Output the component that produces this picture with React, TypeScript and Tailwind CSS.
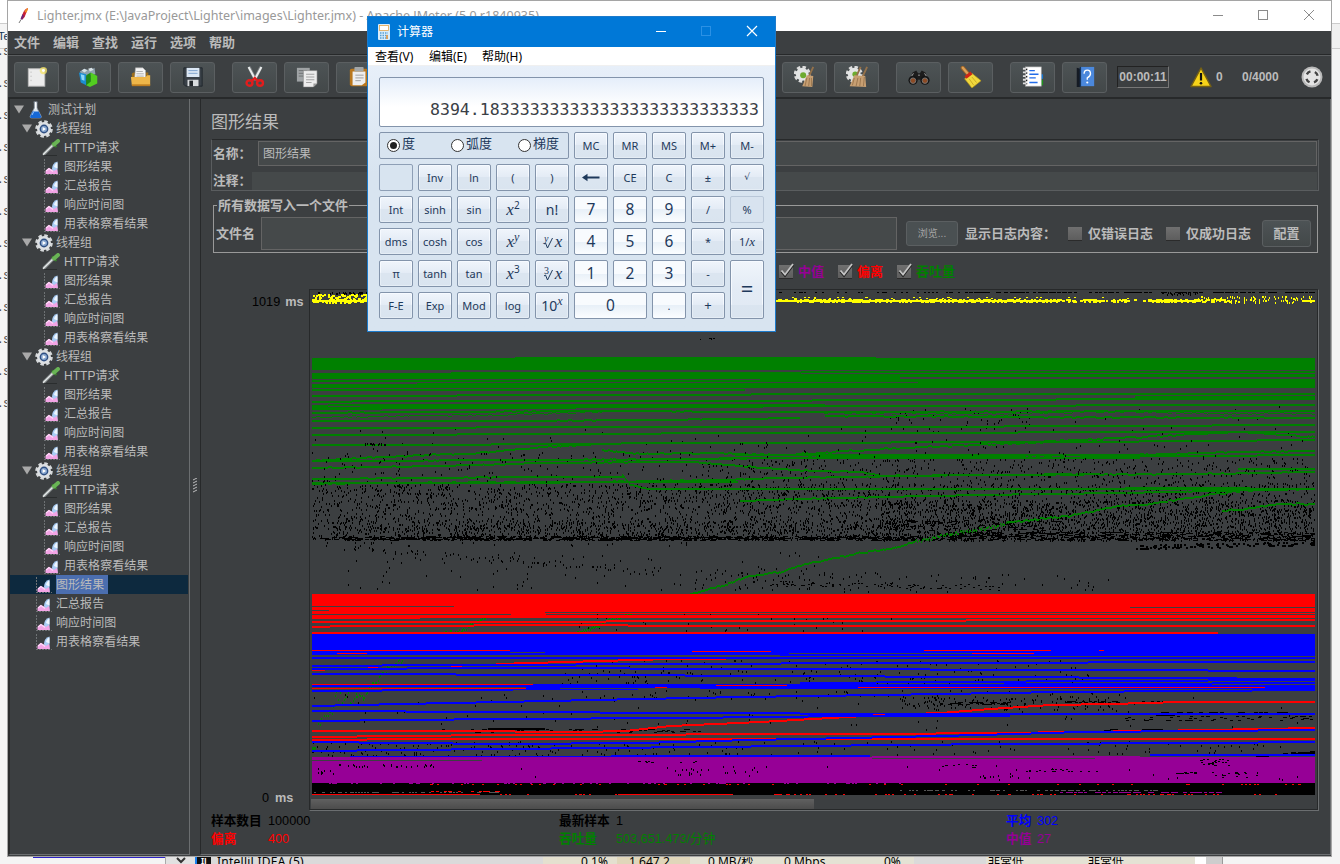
import React from "react";

/* ---------- fonts ---------- */
const SONG = "font-['Liberation_Sans','Noto_Sans_CJK_SC',sans-serif]";
const SEGOE = "font-['Noto_Sans','Noto_Sans_CJK_SC',sans-serif]";

/* ---------- chart helpers ---------- */
type Pt = [number, number];

function makeRandom(seed: number) {
  let s = seed;
  return () => {
    s = (s * 1664525 + 1013904223) % 4294967296;
    return s / 4294967296;
  };
}

const L = 312;
const R = 1315;

/** Staircase line through the points, optionally with a little wobble. */
function stepped(points: Pt[], thick: number, wobble = 0, seed = 1): string {
  const rnd = makeRandom(seed * 7919 + 13);
  let d = "";
  let runStart = points[0][0];
  let runY = Math.round(points[0][1]);
  let seg = 0;
  let off = 0;
  const end = points[points.length - 1][0];
  for (let x = points[0][0]; x <= end; x++) {
    while (seg < points.length - 2 && x > points[seg + 1][0]) seg++;
    const [x1, y1] = points[seg];
    const [x2, y2] = points[seg + 1];
    if (wobble > 0 && x % 4 === 0) off = (rnd() - 0.5) * 2 * wobble;
    const y = Math.round(y1 + ((y2 - y1) * (x - x1)) / (x2 - x1) + off);
    if (y !== runY || x === end) {
      d += `M${runStart} ${runY}h${x - runStart}v${thick}h${runStart - x}z`;
      runStart = x;
      runY = y;
    }
  }
  return d;
}

/** Sparse one pixel dots scattered round a path. */
function dotted(points: Pt[], step: number, spread: number, seed: number): string {
  const rnd = makeRandom(seed);
  let d = "";
  for (let i = 0; i < points.length - 1; i++) {
    const [x1, y1] = points[i];
    const [x2, y2] = points[i + 1];
    for (let x = x1; x < x2; x += step) {
      const y = Math.round(y1 + ((y2 - y1) * (x - x1)) / (x2 - x1) + (rnd() - 0.5) * spread);
      d += `M${Math.round(x)} ${y}h1v2h-1z`;
    }
  }
  return d;
}

const flat = (y: number, h: number, x1 = L, x2 = R) => `M${x1} ${y}h${x2 - x1}v${h}h${x1 - x2}z`;

function specks(x1: number, x2: number, ya: number, yb: number, n: number, seed: number, w = 1, h = 2, slope = 0) {
  const rnd = makeRandom(seed);
  let d = "";
  for (let i = 0; i < n; i++) {
    const x = Math.min(R - w, Math.floor(x1 + rnd() * (x2 - x1)));
    const y = Math.floor(ya + rnd() * (yb - ya) + slope * (x - x1));
    d += `M${x} ${y}h${w}v${h}h${-w}z`;
  }
  return d;
}

const GREEN = [
  flat(358, 12), flat(357, 1, 515, 876),
  stepped([[L, 373], [400, 373], [500, 372], [1100, 371], [R, 371]], 2), flat(374, 3), flat(377, 2, L, 900),
  flat(380, 2), stepped([[L, 384], [520, 383], [R, 382]], 4), flat(386, 2, 400, R), flat(379, 1, 760, R),
  flat(389, 2, L, 745), flat(386, 2, 930, R),
  stepped([[L, 395], [600, 394], [900, 393], [R, 393]], 2),
  stepped([[L, 401], [390, 400], [648, 400], [975, 399], [1135, 398], [R, 398]], 2), flat(396, 3, 1135, R),
  stepped([[L, 405], [340, 404], [825, 404]], 2, 0.3, 4), stepped([[L, 407], [500, 405], [825, 404]], 2),
  stepped([[L, 408], [450, 407], [700, 406], [824, 405], [1070, 405], [1080, 404], [R, 404]], 2),
  stepped([[L, 412], [430, 411], [600, 410], [760, 411], [1315, 410]], 2, 0.2, 5),
  stepped([[L, 417], [360, 416], [520, 414], [640, 410]], 1, 0.7, 6),
  stepped([[820, 412], [1000, 414], [1100, 411], [1220, 413], [R, 413]], 1, 0.8, 26),
  stepped([[825, 415], [1000, 416], [R, 417]], 2, 0.4, 16),
  stepped([[L, 420], [500, 420], [650, 419], [800, 417]], 2, 0.2, 7),
  stepped([[L, 427], [470, 427], [480, 426], [900, 426], [R, 424]], 2),
  stepped([[L, 434], [600, 433], [720, 432], [R, 431]], 2),
  stepped([[L, 444], [440, 444], [540, 443], [700, 442], [1080, 441], [R, 439]], 2), flat(445, 1, L, 470),
  stepped([[L, 460], [380, 456], [430, 454], [480, 452], [540, 446], [600, 443]], 2, 0.6, 9),
  stepped([[602, 449], [640, 453], [690, 452], [780, 454], [850, 450], [900, 447], [1000, 443], [1100, 438], [1180, 434], [1240, 431], [R, 436]], 2, 0.7, 10),
  stepped([[L, 460], [540, 459], [700, 458], [850, 456], [1130, 454], [1240, 451], [R, 450]], 2, 0.3, 11),
  flat(454, 2, 735, 1080), flat(457, 2, 720, 1140), stepped([[1080, 456], [1315, 454]], 2),
  stepped([[L, 467], [440, 465], [550, 462], [690, 461], [740, 465], [790, 469], [860, 471], [880, 475], [1000, 474], [1200, 473], [R, 471]], 2, 0.4, 12),
  stepped([[L, 478], [430, 477], [520, 476], [624, 476]], 2, 0.3, 13), flat(468, 2, 1238, R),
  stepped([[L, 483], [400, 482], [560, 481], [738, 481]], 2, 0.4, 14), flat(482, 2, L, 560),
  stepped([[600, 481], [720, 479], [780, 477], [900, 475], [1100, 473]], 2, 0.4, 15),
  stepped([[622, 474], [630, 484], [648, 488], [900, 488], [R, 488]], 2, 0.3, 17), flat(487, 2, 1125, 1250),
  stepped([[740, 500], [800, 498], [980, 494], [1120, 492], [R, 488]], 2, 0.3, 18),
  stepped([[690, 593], [728, 583], [745, 576], [780, 571], [810, 562], [860, 552], [890, 548], [915, 541]], 2, 0.8, 19),
  stepped([[1008, 522], [1040, 518], [1070, 515], [1110, 506], [1150, 503], [1200, 495], [1240, 490]], 2, 0.8, 27),
  stepped([[1222, 510], [1250, 507], [1280, 503], [R, 503]], 2, 0.8, 20),
  dotted([[915, 541], [950, 533], [990, 527], [1010, 521]], 1.2, 3, 19),
  flat(747, 3, L, 316),
].join("");

const GREEN_DOTS = [
  dotted([[577, 632], [600, 625]], 1, 3, 23),
  dotted([[601, 622], [612, 618], [635, 612]], 1.2, 3, 28),
  dotted([[318, 727], [330, 708], [340, 692]], 1.6, 16, 24),
  dotted([[341, 706], [350, 688]], 1.3, 6, 21), dotted([[350, 703], [356, 694], [363, 697], [372, 684], [388, 668], [402, 660]], 1.4, 5, 29),
  dotted([[445, 632], [462, 630], [470, 624], [480, 619], [500, 609]], 1.2, 3, 22),
].join("");

const RED = [
  flat(594, 12), flat(606, 1, 454, R), flat(607, 5), flat(612, 2), flat(615, 3), flat(614, 1, 511, 546), flat(618, 1, L, 420),
  stepped([[L, 621], [596, 621], [615, 620], [R, 619]], 2),
  stepped([[L, 626], [347, 625], [600, 624], [655, 625], [R, 625]], 2),
  flat(632, 2, L, 1218),
  stepped([[496, 663], [530, 662], [600, 660], [670, 658], [780, 657]], 2),
  flat(670, 1, L, 325),
  stepped([[L, 730], [450, 730], [580, 731], [625, 730], [670, 725], [760, 721], [830, 717], [880, 714], [940, 712], [990, 708], [1050, 704], [1110, 703], [1180, 701], [R, 701]], 2),
  stepped([[L, 736], [400, 735], [500, 734], [870, 733], [1000, 732], [1150, 730], [R, 727]], 2),
  stepped([[L, 739], [420, 738], [R, 738]], 2),
].join("");

const BLUE = [
  flat(634, 16), flat(650, 5), flat(655, 1, 780, R), flat(657, 2), stepped([[L, 653], [700, 653], [1000, 654], [R, 655]], 2),
  stepped([[L, 665], [450, 664], [700, 663], [860, 662], [R, 661]], 2),
  stepped([[L, 668], [500, 667], [760, 668], [1100, 669], [R, 670]], 2),
  stepped([[L, 673], [600, 674], [770, 675], [1000, 676], [R, 678]], 2),
  flat(685, 2), stepped([[L, 690], [450, 689], [700, 687], [R, 687]], 2), flat(684, 4, 526, 1000),
  stepped([[800, 682], [950, 681], [1100, 680], [R, 679]], 2), stepped([[900, 684], [R, 682]], 2),
  stepped([[L, 705], [400, 703], [500, 701], [640, 698], [740, 696], [880, 694], [1060, 691], [R, 689]], 2),
  stepped([[L, 710], [500, 711], [700, 712], [900, 713], [R, 713]], 2),
  stepped([[L, 720], [500, 718], [680, 717], [850, 715], [1010, 715]], 2),
  stepped([[L, 741], [500, 743], [640, 742], [750, 739], [850, 737], [980, 734], [1080, 731], [1200, 730], [R, 729]], 2),
  stepped([[L, 750], [400, 749], [600, 747], [800, 745], [1000, 743], [1200, 742], [R, 741]], 2),
  stepped([[350, 756], [870, 755]], 2), flat(754, 2, 1150, R),
].join("");

const RED_TOP = [
  flat(650, 1, L, 510), flat(653, 1, 337, 367), flat(651, 1, 692, 771), flat(650, 1, 924, 1051), flat(650, 1, 1099, 1104),
  flat(653, 1, 972, 1034), flat(684, 1, L, 533), flat(688, 1, L, 526), flat(685, 1, 716, 787), flat(687, 1, 858, 1265),
  flat(687, 1, 655, 667), flat(667, 1, 368, 378), flat(666, 1, 451, 462), flat(714, 1, 873, 885),
].join("");

const GAPS = [
  flat(370, 1), flat(383, 1, L, 345), flat(389, 1, 770, 940), flat(606, 1, L, 454), flat(610, 1, L, 329), flat(614, 1, L, 511),
  flat(612, 1, 545, 1315), flat(607, 1, 1130, R), flat(656, 1, L, 380), flat(652, 1, 510, 545), flat(653, 1, 789, 972),
  flat(688, 1, 560, 700), flat(656, 1, 1037, 1082), flat(656, 1, 1145, R),
].join("");

const BLACK = [
  specks(312, 1315, 484, 540, 2700, 3), specks(312, 900, 484, 510, 260, 31), specks(330, 900, 520, 540, 800, 4),
  specks(880, 1315, 500, 541, 1500, 6), specks(700, 1315, 458, 490, 620, 8), specks(312, 700, 452, 486, 130, 9),
  specks(312, 1315, 428, 455, 50, 10), specks(1000, 1315, 405, 450, 20, 12), specks(890, 1030, 408, 432, 60, 13),
  specks(340, 960, 536, 541, 480, 14, 3, 1), specks(940, 1315, 532, 541, 420, 15, 4, 1), specks(320, 900, 537, 540, 320, 16, 4, 1),
  specks(1135, 1315, 545, 549, 110, 17, 2, 2, -0.02), specks(316, 700, 542, 546, 24, 18), specks(340, 660, 544, 549, 60, 19, 1, 2, 0.08),
  specks(350, 900, 549, 560, 45, 46, 1, 2, 0.05),
  specks(480, 820, 552, 590, 70, 20), specks(680, 1110, 572, 592, 90, 21), specks(770, 1000, 581, 586, 70, 22, 2, 1, 0.02),
  specks(330, 560, 560, 592, 20, 23), specks(880, 1060, 520, 531, 50, 45, 5, 1),
  specks(560, 900, 614, 631, 40, 24), specks(560, 1100, 660, 684, 190, 25), specks(580, 1100, 690, 700, 60, 26),
  specks(312, 1300, 694, 730, 90, 27), specks(900, 1110, 696, 710, 130, 28), specks(940, 1010, 702, 705, 40, 47, 3, 1), specks(1060, 1210, 701, 703, 40, 48, 3, 1),
  specks(1120, 1315, 716, 721, 50, 29, 3, 1), specks(1160, 1300, 712, 714, 40, 49, 4, 1),
  specks(312, 560, 742, 756, 110, 30), specks(440, 700, 729, 733, 80, 32, 3, 1), specks(500, 1300, 741, 755, 130, 33),
  specks(1255, 1315, 755, 757, 50, 34, 5, 1, -0.06), specks(1100, 1160, 729, 731, 30, 35, 4, 1),
  flat(728, 2, 488, 545), flat(714, 2, 1156, 1175), flat(731, 2, 1110, 1122),
].join("");

const BLACK_TOP = [
  specks(318, 368, 292, 294, 30, 41, 1, 2), specks(776, 960, 292, 293, 34, 42, 2, 1), specks(960, 1315, 292, 293, 120, 43, 3, 1), specks(1160, 1200, 292, 295, 24, 44, 1, 2),
  flat(339, 1, 700, 701), flat(338, 1, 709, 712), flat(338, 1, 713, 715), flat(339, 1, 711, 712),
].join("");

const YELLOW = [
  flat(300, 2, L, 1060), flat(300, 2, 1148, 1200), specks(L, 368, 294, 303, 80, 51, 2, 2), specks(L, 1130, 299, 302, 850, 52, 2, 2),
  specks(1148, 1230, 299, 302, 90, 56, 2, 2),
  specks(776, 1130, 297, 300, 50, 53, 2, 1), specks(1190, 1312, 296, 303, 100, 54, 1, 2), flat(300, 2, 1302, R), specks(1130, 1146, 299, 301, 4, 57, 2, 2),
].join("");

const MAGENTA_NOISE = [
  specks(318, 335, 768, 774, 8, 60, 1, 2), specks(335, 440, 764, 767, 26, 61, 1, 2), specks(635, 700, 761, 763, 10, 62, 2, 1), specks(675, 760, 769, 777, 22, 67),
  specks(940, 990, 764, 768, 10, 68, 2, 1), specks(1025, 1100, 769, 772, 22, 63, 2, 1), specks(980, 1030, 775, 778, 12, 69, 1, 2),
  specks(1200, 1230, 759, 766, 24, 64, 2, 1), specks(1176, 1195, 772, 774, 10, 70, 3, 1), specks(1210, 1260, 772, 778, 16, 81, 2, 1), specks(440, 1310, 765, 780, 26, 65, 1, 2),
].join("");

const Chart = () => (
  <svg className="block" width="1007" height="507" viewBox="310 290 1007 507" shapeRendering="crispEdges">
    <path d={BLACK} fill="#000" />
    <path d={GREEN + GREEN_DOTS} fill="#008000" />
    <path d={specks(700, 1240, 492, 540, 200, 77) + specks(640, 1315, 440, 484, 130, 78) + specks(312, 640, 450, 484, 40, 82) + specks(365, 386, 443, 445, 16, 79)} fill="#000" />
    <path d={GAPS} fill="#3c3f41" />
    <path d={RED} fill="#f00" />
    <path d={BLUE} fill="#00f" />
    <path d={RED_TOP} fill="#f00" />
    <path d={GAPS} fill="#3c3f41" />
    <path d={BLACK_TOP} fill="#000" />
    <path d={YELLOW} fill="#ff0" />
    <path d={flat(757, 26) + flat(756, 1, 872, 1140)} fill="#960096" />
    <path d={flat(760, 1, L, 482) + flat(758, 1, 872, 1095)} fill="#3c3f41" />
    <path d={MAGENTA_NOISE} fill="#000" />
    <path d={flat(783, 12)} fill="#000" />
    <path d={specks(312, 500, 792, 793, 55, 71, 2, 1) + specks(900, 1160, 790, 791, 80, 72, 2, 1)} fill="#555" />
    <path d={specks(312, 900, 783, 784, 60, 73, 2, 1) + specks(1060, 1220, 792, 793, 70, 74, 3, 1)} fill="#960096" />
    <path d={flat(794, 1, 312, 480) + flat(794, 1, 618, 733) + specks(480, 1315, 794, 795, 90, 75, 2, 1) + specks(430, 1315, 784, 785, 50, 76, 2, 1) + specks(430, 500, 791, 792, 14, 80, 3, 1)} fill="#f00" />
  </svg>
);

/* ---------- icons ---------- */
const Flask = () => (
  <svg width="16" height="18" viewBox="0 0 16 18">
    <path d="M5.500 1h4M6.300 1v6L2 15.500q0 1.500 1.500 1.500h8.500q1.500 0 1.300-1.500L9 7V1z" fill="#dfe7ee" stroke="#8a96a2" strokeWidth=".8" />
    <path d="M4.400 10.500h6.300l2.500 5q0 1.500-1.300 1.500H3.300Q2 17 2.200 15.500z" fill="#1668d6" />
    <path d="M5.500 11l-1.500 3" stroke="#9ccaff" />
    <path d="M7.700 1v7" stroke="#fff" strokeWidth="1.200" />
  </svg>
);
const Gear = () => (
  <svg width="18" height="18" viewBox="0 0 18 18">
    <circle cx="9" cy="9" r="7.300" fill="none" stroke="#d5d8da" strokeWidth="3" strokeDasharray="3.400 2.330" />
    <circle cx="9" cy="9" r="7" fill="#dde0e3" />
    <circle cx="9" cy="9" r="4.400" fill="#2f4f82" />
    <circle cx="9" cy="9" r="3" fill="#86a5cf" />
    <path d="M7.700 7l3.300 2-3.300 2z" fill="#fff" />
  </svg>
);
const Dropper = () => (
  <svg width="18" height="17" viewBox="0 0 18 17">
    <path d="M1.500 15.500L11 6" stroke="#7c8082" strokeWidth="3.200" />
    <path d="M1 15.800L11 6" stroke="#e4e8e8" strokeWidth="1.500" />
    <path d="M10 3.500l4.500 4.500" stroke="#397d2c" strokeWidth="2" />
    <path d="M12 5.500L16 2" stroke="#69b455" strokeWidth="4" strokeLinecap="round" />
    <path d="M2 16.500h13" stroke="#232527" strokeWidth=".7" />
  </svg>
);
const Graph = () => (
  <svg width="16" height="17" viewBox="0 0 16 17">
    <path d="M.5 0v16M0 15.500h16" stroke="#6e7274" strokeWidth="1" strokeDasharray="2 1" />
    <path d="M8 10Q8 4 13.500 2.500V14H9z" fill="#a9cdf5" />
    <path d="M10 8q1-4 3.500-4.500v6z" fill="#eef6ff" />
    <path d="M1.500 15v-3l3-3 2.500 1 3 2 3-2 1 5z" fill="#f3a5e6" />
    <path d="M2 12l3-2.500 4 3" stroke="#ffd9f8" strokeWidth="1.200" fill="none" />
  </svg>
);
const Arrow = () => (
  <svg width="10" height="9" viewBox="0 0 10 9"><path d="M0 .5h10L5 8.500z" fill="#a9a9a9" /></svg>
);

const toolIcons: Record<string, React.ReactNode> = {
  new: (
    <><rect x="2.500" y="3" width="18" height="19" fill="#ececec" stroke="#bcbcbc" /><path d="M5.500 6v13" stroke="#bbb" strokeDasharray="1.500 3" /><circle cx="19" cy="5" r="4" fill="#f5e468" opacity=".75" /><circle cx="19" cy="5" r="1.600" fill="#fff" /></>
  ),
  templates: (
    <><path d="M2 6l5-3 6 2 5-3 1 7-14 3z" fill="#8ea2ae" /><path d="M4 5l3-2 3 2-3 2zM11 3l4-1 2 2-4 2z" fill="#d7e1e5" /><path d="M1 7l8 2v12l-6-3z" fill="#1c8ed0" /><path d="M3 9l4 1v6l-3-1z" fill="#8ed8fa" /><path d="M9 10l5-3v10l-5 5z" fill="#1f8a17" /><path d="M14 7l7 4v8l-8 4-4-2 5-4z" fill="#52cd20" /></>
  ),
  open: (
    <><path d="M2 9q0-2 2-2h16v5H2z" fill="#9c6d1b" /><path d="M6 2h8l3 3v9H5z" fill="#f5f5f5" stroke="#aaa" strokeWidth=".6" /><path d="M7 6h7M7 8.500h8M7 11h8" stroke="#aaa" /><path d="M1 12h16l2-2h3v11H2z" fill="#eeb649" /><path d="M2 20h20v2H2z" fill="#bd7d20" /></>
  ),
  save: (
    <><path d="M2 2h20v20H4l-2-2z" fill="#3a4148" stroke="#20262c" /><rect x="5" y="2" width="14" height="10" fill="#dbe7f4" /><path d="M7 5h10M7 8h10" stroke="#7ba0cb" /><rect x="6" y="15" width="12" height="7" fill="#d9dcde" /><rect x="8" y="16" width="4" height="6" fill="#23282c" /></>
  ),
  cut: (
    <><path d="M5.500 1l7 14M18.500 1l-7 14" stroke="#777b7e" strokeWidth="3.600" /><path d="M5 1l7.500 14M19 1l-7.500 14" stroke="#e9ecec" strokeWidth="2.200" /><g fill="none" stroke="#e21d1d" strokeWidth="2.600"><ellipse cx="6" cy="18.500" rx="3.200" ry="3" /><ellipse cx="17.500" cy="18.500" rx="3.200" ry="3" /></g><path d="M8.500 16.500l3.300-3.500 3.300 3.500" stroke="#e21d1d" strokeWidth="2.500" fill="none" /></>
  ),
  copy: (
    <><path d="M1 2h14v15H1z" fill="#9fa3a5" /><path d="M3 5h9M3 8h9M3 11h9" stroke="#6c7072" /><path d="M8 5h15v14l-4 4H8z" fill="#ececec" stroke="#777" strokeWidth=".6" /><path d="M11 9h9M11 12h9M11 15h9M11 18h6" stroke="#9b9b9b" /><path d="M19 23v-4h4z" fill="#999" /></>
  ),
  paste: (
    <><rect x="2" y="3" width="20" height="19" rx="2" fill="#b9771d" /><path d="M5 6h14v12l-4 3H5z" fill="#eee" /><rect x="7" y="1" width="10" height="5" rx="1" fill="#a3a7a8" /><path d="M8 10h9M8 13h9M8 16h6" stroke="#999" /></>
  ),
  clear: (
    <><circle cx="9" cy="9" r="7.500" fill="none" stroke="#ddd" strokeWidth="3.500" strokeDasharray="3.600 2.290" /><circle cx="9" cy="9" r="7" fill="#e3e5e5" /><circle cx="10" cy="10" r="3.300" fill="#6dab2f" /><path d="M21 1l-5 11" stroke="#94714a" strokeWidth="2" /><path d="M14 10l7 1-1 12-11-1z" fill="#c79f72" /><path d="M14 13l-2 9M17 13l-1 9M19 13v9" stroke="#8d6a44" strokeWidth=".8" /></>
  ),
  clearAll: (
    <><circle cx="9" cy="9" r="7.500" fill="none" stroke="#ddd" strokeWidth="3.500" strokeDasharray="3.600 2.290" /><circle cx="9" cy="9" r="7" fill="#e3e5e5" /><circle cx="10" cy="9" r="3" fill="#6dab2f" /><path d="M16 1l-5 11M23 1l-5 11" stroke="#94714a" strokeWidth="2" /><path d="M9 10l12 1 1 12-18-1z" fill="#c79f72" /><path d="M9 13l-2 8M13 13l-2 9M16 13l-1 9M20 12l-1 10" stroke="#8d6a44" strokeWidth=".8" /></>
  ),
  find: (
    <><path d="M5 7l4-2 2 3h2l2-3 4 2 3 8H2z" fill="#1c1c1c" /><circle cx="5.500" cy="15.500" r="5" fill="#151515" /><circle cx="18.500" cy="15.500" r="5" fill="#151515" /><circle cx="5.500" cy="16" r="3" fill="#8d4b25" stroke="#777" /><circle cx="18.500" cy="16" r="3" fill="#8d4b25" stroke="#777" /><path d="M6 8l-2 3M18 8l2 3M11 10h2" stroke="#a8a8a8" /></>
  ),
  broom: (
    <><path d="M3 2l6 7" stroke="#9b6327" strokeWidth="4.500" strokeLinecap="round" /><path d="M3 2l6 7" stroke="#dda158" strokeWidth="2.500" strokeLinecap="round" /><path d="M5 14l8-6 10 8-10 8z" fill="#f0d83d" stroke="#b79618" strokeWidth=".7" /><path d="M6 12.500l6.500-5" stroke="#ce2616" strokeWidth="3.500" /><path d="M10 14l5 7M13 12l5 6" stroke="#bd9c1b" strokeWidth=".8" /></>
  ),
  log: (
    <><path d="M18 9h5v5h-5z" fill="#1778d5" /><path d="M18 15h5v6h-5z" fill="#1e941d" /><rect x="4" y="1" width="17" height="21" fill="#fff" stroke="#aaa" strokeWidth=".7" /><path d="M8 5h6M8 9h10M8 13h7M8 18h9" stroke="#236ce8" strokeWidth="1.500" /><path d="M1 3h5M1 7h5M1 11h5M1 15h5M1 19h5" stroke="#dedede" strokeWidth="2" /><path d="M5 3v17" stroke="#222" strokeWidth="1.500" strokeDasharray="1.500 2.500" /></>
  ),
  help: (
    <><path d="M3 2l4 1v20H3z" fill="#151b24" /><rect x="7" y="1" width="15" height="21" fill="#4b88dc" /><path d="M7 1v22" stroke="#17365e" strokeWidth="1.500" /><path d="M11 8.500q0-4 3.500-4T18 8.500q0 2.500-3.500 4.500v2" fill="none" stroke="#fff" strokeWidth="1.500" /><circle cx="14.500" cy="18" r="1.200" fill="#fff" /></>
  ),
};

const ToolButton = ({ name }: { name: string }) => (
  <button className="flex h-[31px] w-[45px] shrink-0 items-center justify-center rounded-[3px] border border-[#5b5f61] bg-gradient-to-b from-[#4d5355] to-[#434849] pl-px">
    <svg width="22" height="22" viewBox="0 0 24 24">{toolIcons[name]}</svg>
  </button>
);

/* ---------- tree ---------- */
const LEAVES = ["图形结果", "汇总报告", "响应时间图", "用表格察看结果"];

const Row = ({ pad, arrow, icon, text, selected }: { pad: string; arrow?: boolean; icon: React.ReactNode; text: string; selected?: boolean }) => (
  <div className={`flex h-[19px] w-[178px] items-center ${pad} ${selected ? "bg-[#0d293e]" : ""}`}>
    {arrow && <span className="mr-[3px] shrink-0"><Arrow /></span>}
    <span className="shrink-0">{icon}</span>
    <span className={`ml-[3px] flex h-[19px] items-center whitespace-nowrap pt-[2px] text-[12px] leading-[17px] tracking-[0.050px] text-[#bbb] ${selected ? "bg-[#4b6eaf] pr-[4px]" : ""}`}>{text}</span>
  </div>
);

const Tree = () => (
  <div className={`${SONG} h-[756px] w-[182px] shrink-0 border-b border-l-2 border-r border-b-[#6b6e70] border-l-[#2a2c2d] border-r-[#6b6e70] pt-px`}>
    <Row pad="pl-[4px]" arrow icon={<span className="flex w-[18px] justify-center"><Flask /></span>} text="测试计划" />
    {[0, 1, 2, 3].map((g) => (
      <div key={g}>
        <Row pad="pl-[12px]" arrow icon={<Gear />} text="线程组" />
        <Row pad="pl-[32px]" icon={<span className="flex w-[19px]"><Dropper /></span>} text="HTTP请求" />
        {LEAVES.map((t) => (
          <Row key={t} pad="pl-[34px]" icon={<span className="flex w-[17px] translate-y-px"><Graph /></span>} text={t} />
        ))}
      </div>
    ))}
    {LEAVES.map((t, i) => (
      <Row key={t} pad="pl-[26px]" selected={i === 0} icon={<span className="flex w-[17px] translate-y-px"><Graph /></span>} text={t} />
    ))}
  </div>
);

/* ---------- form parts ---------- */
const Check = ({ on }: { on?: boolean }) => (
  <span className="flex h-[14px] w-[14px] shrink-0 border-b border-[#2b2b2b] bg-gradient-to-b from-[#707070] to-[#5d5d5d]">
    {on && (
      <svg width="15" height="14" viewBox="0 0 15 14" className="overflow-visible"><path d="M2.500 6.500l3.500 4L14 0" fill="none" stroke="#222" strokeWidth="2.500" /><path d="M2.500 5.500l3.500 4L14-1" fill="none" stroke="#c4c4c4" strokeWidth="1.800" /></svg>
    )}
  </span>
);

const Stat = ({ label, value, color, gap }: { label: string; value: string; color: string; gap: string }) => (
  <div className={`flex items-center ${color}`}>
    <span className={`${gap} shrink-0 text-[12.700px] font-bold`}>{label}</span>
    <span className="text-[12.700px]">{value}</span>
  </div>
);

const Main = () => (
  <div className={`${SONG} flex h-[756px] w-[1131px] shrink-0 flex-col border-b border-l border-r border-b-[#6b6e70] border-l-[#27292a] border-r-[#6b6e70] pl-[10px] text-[#bbb]`}>
    <h1 className="flex h-[40px] items-center pt-[6px] text-[17px] leading-none">图形结果</h1>
    <div className="h-[52px] w-[1108px] border border-[#5a5d5f] border-t-[#27292a] pt-px text-[13px] font-bold">
      <div className="flex h-[25px] items-center">
        <span className="w-[46px] pl-px pt-px text-[12.800px]">名称：</span>
        <div className="flex h-[25px] w-[1059px] items-center border border-[#646464] bg-[#45494a] pl-[4px] text-[12px] font-normal">图形结果</div>
      </div>
      <div className="mt-[5px] flex h-[19px] items-center">
        <span className="w-[40px] whitespace-nowrap pl-px pt-px text-[12.800px]">注释：</span>
        <div className="h-[18px] w-[1065px] bg-[#45494a]" />
      </div>
    </div>
    <fieldset className="ml-[2px] mt-[7px] h-[55px] w-[1105px] border border-[#999] text-[12.500px]">
      <legend className="ml-[3px] h-[14px] px-px text-[13px] font-bold leading-[15px]">所有数据写入一个文件</legend>
      <div className="mt-[5px] flex h-[33px] items-center">
        <span className="w-[47px] shrink-0 pl-[2px] text-[13px] font-bold">文件名</span>
        <div className="h-[33px] w-[636px] shrink-0 border border-[#646464] bg-[#45494a]" />
        <button className="ml-[9px] flex h-[25px] w-[52px] shrink-0 items-center justify-center rounded-[3px] border border-[#5b5f61] bg-[#4a5052] text-[10px] text-[#a5a5a5]">浏览...</button>
        <span className="ml-[7px] w-[103px] shrink-0 whitespace-nowrap text-[13px] font-bold">显示日志内容：</span>
        <Check />
        <span className="ml-[6px] w-[78px] shrink-0 text-[13px] font-bold">仅错误日志</span>
        <Check />
        <span className="ml-[6px] w-[76px] shrink-0 text-[13px] font-bold">仅成功日志</span>
        <button className="flex h-[27px] w-[49px] shrink-0 items-center justify-center rounded-[3px] border border-[#5b5f61] bg-gradient-to-b from-[#4d5355] to-[#434849] text-[13px] font-bold">配置</button>
      </div>
    </fieldset>
    <div className="ml-[568px] flex h-[36px] items-center pt-[2px] text-[13px] font-bold">
      <Check on /><span className="ml-[5px] w-[40px] text-[#960096]">中值</span>
      <Check on /><span className="ml-[5px] w-[40px] text-[#f00]">偏离</span>
      <Check on /><span className="ml-[5px] text-[#008000]">吞吐量</span>
    </div>
    <div className="flex h-[522px] shrink-0">
      <div className="flex w-[98px] shrink-0 flex-col justify-between pb-[6px] pt-[6px] text-[12.700px] leading-[14px]">
        <div className="pl-[41px]"><span className="text-black">1019</span><b className="ml-[5px]">ms</b></div>
        <div className="pl-[51px]"><span className="text-black">0</span><b className="ml-[6px]">ms</b></div>
      </div>
      <div className="h-[522px] w-[1010px] shrink-0 border-b border-l border-r border-t border-b-[#6b6e70] border-l-[#27292a] border-r-[#6b6e70] border-t-[#27292a]">
        <div className="h-[520px] border-b border-r border-[#27292a]">
          <Chart />
          <div className="ml-px mt-[2px] h-[10px] w-[503px] bg-gradient-to-b from-[#606060] to-[#4c4c4c]" />
        </div>
      </div>
    </div>
    <div className="grid shrink-0 grid-cols-[348px_447px_1fr] grid-rows-[19px_18px] leading-[18px]">
      <Stat label="样本数目" value="100000" color="text-black" gap="w-[57px]" />
      <Stat label="最新样本" value="1" color="text-black" gap="w-[57px]" />
      <Stat label="平均" value="302" color="text-[#00f]" gap="w-[31px]" />
      <Stat label="偏离" value="400" color="text-[#f00]" gap="w-[57px]" />
      <Stat label="吞吐量" value="503,651.473/分钟" color="text-[#008000]" gap="w-[57px]" />
      <Stat label="中值" value="27" color="text-[#960096]" gap="w-[31px]" />
    </div>
  </div>
);

/* ---------- calculator ---------- */
const X = () => <i className="font-['Liberation_Serif',serif] text-[17px]">x</i>;
const Sup = ({ children, italic }: { children: React.ReactNode; italic?: boolean }) => (
  <span className={`mb-[9px] leading-none ${italic ? "font-['Liberation_Serif',serif] text-[12px] italic" : "text-[10px]"}`}>{children}</span>
);
const Root = ({ n }: { n: string }) => (
  <>
    <svg width="12" height="18" viewBox="0 0 12 18">
      <path d="M2 11l1.500-1 2 5L10.500 5" fill="none" stroke="#1e395b" strokeWidth="1" />
      <text x="2" y="9" fontSize="10" fill="#1e395b" fontStyle={n === "y" ? "italic" : "normal"} fontFamily="Liberation Serif">{n}</text>
    </svg>
    <span className="ml-px"><X /></span>
  </>
);

type Key = { t: React.ReactNode; cls?: string; num?: boolean; off?: boolean; dim?: boolean };
const BIG = "text-[15.500px]";
const keys: Key[] = [
  { t: "MC" }, { t: "MR" }, { t: "MS" }, { t: "M+" }, { t: "M-" },
  { t: "", off: true }, { t: "Inv" }, { t: "ln" }, { t: "(" }, { t: ")" },
  { t: <svg width="18" height="9" viewBox="0 0 18 9"><path d="M17.500 4.500H3" stroke="#1e395b" strokeWidth="2" /><path d="M0 4.500L5.500.8v7.400z" fill="#1e395b" /></svg> },
  { t: "CE" }, { t: "C" }, { t: "±" }, { t: <span className="font-['DejaVu_Sans',sans-serif] text-[9px]">√</span> },
  { t: "Int" }, { t: "sinh" }, { t: "sin" }, { t: <><X /><Sup>2</Sup></> }, { t: "n!", cls: "text-[14px]" },
  { t: "7", num: true }, { t: "8", num: true }, { t: "9", num: true }, { t: "/" }, { t: "%", dim: true },
  { t: "dms" }, { t: "cosh" }, { t: "cos" }, { t: <><X /><Sup italic>y</Sup></> }, { t: <Root n="y" /> },
  { t: "4", num: true }, { t: "5", num: true }, { t: "6", num: true }, { t: "*" }, { t: <span>1/<i className="font-['Liberation_Serif',serif] text-[13px]">x</i></span> },
  { t: "π" }, { t: "tanh" }, { t: "tan" }, { t: <><X /><Sup>3</Sup></> }, { t: <Root n="3" /> },
  { t: "1", num: true }, { t: "2", num: true }, { t: "3", num: true }, { t: "-" }, { t: "=", cls: "row-span-2 pb-[4px] text-[22px]" },
  { t: "F-E" }, { t: "Exp" }, { t: "Mod" }, { t: "log" }, { t: <><span className="text-[14px]">10</span><Sup italic>x</Sup></> },
  { t: "0", num: true, cls: "col-span-2" }, { t: ".", num: true, cls: "text-[11px]" }, { t: "+", cls: "text-[13px]" },
];

function keyLook(k: Key) {
  if (k.off) return "border-[#8e9fb6] bg-[#d8e4f0]";
  if (k.dim) return "border-[#b9c7d8] bg-[#d8e3ef]";
  if (k.num) return "border-[#8394ab] bg-gradient-to-b from-[#f8fbfe] from-50% via-[#e8f0f8] via-50% to-[#fbfdff]";
  return "border-[#8394ab] bg-gradient-to-b from-[#f0f5fb] to-[#e0e9f3] from-0% via-[#e3ebf5] via-50% shadow-[inset_0_-13px_0_#d3dfec80,inset_0_0_0_1px_#f6faff]";
}

const Radio = ({ on, text, w }: { on?: boolean; text: string; w: string }) => (
  <span className={`flex items-center ${w}`}>
    <span className="mr-[2px] flex h-[13px] w-[13px] items-center justify-center rounded-full border border-[#333] bg-white">
      {on && <span className="h-[7px] w-[7px] rounded-full bg-[#222]" />}
    </span>
    <span className="-mt-[3px]">{text}</span>
  </span>
);

const Calculator = () => (
  <div className={`${SEGOE} absolute left-[367px] top-[16px] h-[316px] w-[409px] border border-[#1d7bcb] bg-gradient-to-b from-[#eef4fd] to-[#d8e4f0] to-50%`}>
    <div className="flex h-[30px] items-center bg-[#0078d7] pl-[10px] text-[12px] text-white">
      <svg width="12" height="16" viewBox="0 0 12 16">
        <rect width="12" height="16" rx="1" fill="#d8ecfa" /><rect x="1.500" y="1.500" width="9" height="5" fill="#fff" stroke="#e0a44d" strokeWidth=".8" />
        <path d="M2 9h8M2 11.500h8M2 14h8" stroke="#579ed2" strokeWidth="1.500" strokeDasharray="1.500 1" /><path d="M9 11v4" stroke="#e59035" strokeWidth="1.500" />
      </svg>
      <span className="ml-[7px]">计算器</span>
      <svg className="mb-[2px] ml-[223px]" width="104" height="14" viewBox="0 0 104 14">
        <path d="M0 7.500h10" stroke="#fff" /><rect x="45.500" y="2.500" width="9" height="9" fill="none" stroke="#2b91e5" /><path d="M91 2l10 10M101 2L91 12" stroke="#fff" strokeWidth="1.200" />
      </svg>
    </div>
    <div className="flex h-[19px] items-center border-b border-[#f0f0f0] bg-white pl-[7px] pt-px text-[12px] text-black">
      <span className="w-[54px]">查看(V)</span><span className="w-[53px]">编辑(E)</span><span>帮助(H)</span>
    </div>
    <div className="ml-[11px] mt-[11px] flex h-[50px] w-[385px] items-end justify-end rounded-[2px] border border-[#8394ab] bg-gradient-to-b from-[#e5eefa] to-white to-60% pb-[7px] pr-[4px] font-['DejaVu_Sans_Mono',monospace] text-[16.570px] leading-[18px] text-[#3a4046]">
      8394.1833333333333333333333333333
    </div>
    <div className="ml-[11px] mt-[5px] grid grid-cols-[repeat(10,34px)] grid-rows-[repeat(6,27px)] gap-[5px] text-[11px] text-[#1e395b]">
      <div className="col-span-5 flex items-center rounded-[2px] border border-[#8394ab] bg-[#d8e4f0] pl-[7px] text-[13px]">
        <Radio on text="度" w="w-[64px]" /><Radio text="弧度" w="w-[67px]" /><Radio text="梯度" w="w-[50px]" />
      </div>
      {keys.map((k, i) => (
        <button key={i} className={`flex items-center justify-center rounded-[2px] border leading-none ${keyLook(k)} ${k.num && k.t !== "." ? BIG : ""} ${k.cls ?? ""}`}>{k.t}</button>
      ))}
    </div>
  </div>
);

/* ---------- window ---------- */
const Feather = () => (
  <svg width="12" height="16" viewBox="0 0 12 16">
    <path d="M10 0Q6.500 1 5 5L3 10.500l1.500 1q2.500-2 3.500-6z" fill="#c71f37" /><path d="M10 0Q7.500.5 6.500 4l1.800.8q2-3 1.700-4.800z" fill="#f28a23" /><path d="M4.500 6l-2 5 1.600.8L6 8z" fill="#6d2379" /><path d="M3 11.500L1 15" stroke="#555" strokeWidth=".8" />
  </svg>
);

const SIDE = Array.from({ length: 12 }, (_, i) => i);

export default function App() {
  return (
    <div className={`${SONG} relative h-[864px] w-[1340px] overflow-hidden bg-[#f4f4f4]`}>
      <div className="flex h-[857px]">
        <div className="w-[7px] shrink-0 overflow-hidden font-['Liberation_Mono',monospace] text-[11px] text-[#444]">
          <div className="h-[24px] border-b border-[#ccc] bg-white" />
          <div className="-ml-[2px] h-[25px] border-b border-[#ccc] font-['Liberation_Sans',sans-serif] leading-[25px] text-[#135]">Te</div>
          {SIDE.map((i) => (
            <div key={i} className="-ml-[3px] h-[32px] leading-[6px]">.S</div>
          ))}
        </div>
        <div className="flex h-[857px] w-[1325px] shrink-0 flex-col border border-[#a5a5a5] bg-[#3c3f41]">
          <div className="flex h-[30px] shrink-0 items-center bg-white pl-[10px]">
            <Feather />
            <span className={`${SEGOE} ml-[7px] w-[1175px] whitespace-nowrap text-[12.500px] tracking-[0.010px] text-[#999]`}>
              Lighter.jmx (E:\JavaProject\Lighter\images\Lighter.jmx) - Apache JMeter (5.0 r1840935)
            </span>
            <svg className="-mt-[2px]" width="104" height="12" viewBox="0 0 104 12">
              <path d="M1 6.500h10" stroke="#8b8b8b" /><rect x="46.500" y="1.500" width="9" height="9" fill="none" stroke="#8b8b8b" /><path d="M92 1l10 10M102 1L92 11" stroke="#8b8b8b" />
            </svg>
          </div>
          <div className="flex h-[25px] shrink-0 items-center border-b border-[#5a5d5f] pb-px pl-[6px] text-[13px] font-bold text-[#bbb] shadow-[inset_0_-1px_0_#27292a]">
            {["文件", "编辑", "查找", "运行", "选项", "帮助"].map((m) => (
              <span key={m} className="w-[39px]">{m}</span>
            ))}
          </div>
          <div className="flex h-[43px] shrink-0 items-center gap-[7px] border-b-2 border-[#27292a] pl-[6px] pt-px text-[#bbb]">
            <ToolButton name="new" /><ToolButton name="templates" /><ToolButton name="open" /><ToolButton name="save" />
            <span className="w-[3px]" />
            <ToolButton name="cut" /><ToolButton name="copy" /><ToolButton name="paste" />
            <span className="w-[387px]" />
            <ToolButton name="clear" /><ToolButton name="clearAll" />
            <span className="w-[3px]" />
            <ToolButton name="find" /><ToolButton name="broom" />
            <span className="w-[3px]" />
            <ToolButton name="log" /><ToolButton name="help" />
            <span className="ml-[3px] flex h-[22px] w-[52px] shrink-0 items-center justify-center border border-b-[#777] border-l-[#222] border-r-[#777] border-t-[#222] text-[12px] font-bold">00:00:11</span>
            <svg className="ml-[14px] shrink-0" width="22" height="21" viewBox="0 0 22 21">
              <path d="M11 1l10 18.500H1z" fill="#f7d319" stroke="#756014" strokeWidth="1.500" strokeLinejoin="round" /><path d="M11 6v7.500" stroke="#111" strokeWidth="2.200" /><circle cx="11" cy="16.300" r="1.300" fill="#111" />
            </svg>
            <b className="-ml-[3px] w-[19px] text-[12px]">0</b>
            <b className="w-[52px] text-[12px]">0/4000</b>
            <svg className="shrink-0" width="22" height="22" viewBox="0 0 22 22">
              <circle cx="11" cy="11" r="10.500" fill="#b9b9b9" /><circle cx="11" cy="11" r="8.500" fill="#e4e4e4" />
              <circle cx="11" cy="11" r="5.800" fill="none" stroke="#444" strokeWidth="2.400" strokeDasharray="4.500 4.610" strokeDashoffset="-2.300" />
            </svg>
          </div>
          <div className="flex h-[756px] shrink-0">
            <Tree />
            <div className="flex w-[10px] shrink-0 items-center justify-center pt-[18px]">
              <svg width="4" height="16" viewBox="0 0 4 16"><path d="M0 2l4-2M0 5l4-2M0 8l4-2M0 11l4-2M0 14l4-2" stroke="#ccc" strokeWidth=".9" /></svg>
            </div>
            <Main />
          </div>
        </div>
        <div className="w-[8px] shrink-0">
          <div className="h-[24px] border-b border-[#ccc] bg-white" />
          <div className="h-[25px] border-b border-[#ccc] bg-[#f0f0f0]" />
        </div>
      </div>
      <div className={`${SEGOE} flex h-[7px] overflow-hidden text-[12px] leading-[10px] text-black`}>
        <div className="w-[33px] shrink-0" />
        <div className="w-[132px] shrink-0 border-t border-[#2c22c4]" />
        <div className="flex w-[30px] shrink-0 justify-center border-l border-[#aaa] bg-[#e1e1e1]">
          <svg width="10" height="7" viewBox="0 0 10 7"><path d="M1 1l4 4 4-4" fill="none" stroke="#333" strokeWidth="2" /></svg>
        </div>
        <div className="w-[16px] shrink-0 border-l-2 border-[#1b7ff0] bg-[#111] pl-[4px] text-[8px] font-bold leading-[7px] text-white">IJ</div>
        <div className="w-[332px] shrink-0 bg-[#dadada] pl-[6px] tracking-[0.250px]">IntelliJ IDEA (5)</div>
        <div className="w-[74px] shrink-0 bg-[#e4e0cf] pl-[38px]">0.1%</div>
        <div className="w-[73px] shrink-0 bg-[#e0d6ba] pl-[12px]">1,647.2</div>
        <div className="w-[75px] shrink-0 whitespace-nowrap bg-[#e4e2d4] pl-[18px]">0 MB/秒</div>
        <div className="w-[144px] shrink-0 bg-[#e4e2d4] pl-[19px]">0 Mbps</div>
        <div className="w-[77px] shrink-0 bg-[linear-gradient(90deg,#e4e2d4_5px,#dadada_5px)] pl-[2px]"><span className="-ml-[27px]">0%</span></div>
        <div className="w-[100px] shrink-0 bg-[#e4e2d4] pl-[2px]">非常低</div>
        <div className="w-[109px] shrink-0 bg-[#e4e2d4] pl-[2px]">非常低</div>
        <div className="w-[11px] shrink-0 bg-white" />
        <div className="w-[17px] shrink-0 border-r border-[#999] bg-[#cdcdcd]" />
      </div>
      <Calculator />
    </div>
  );
}
